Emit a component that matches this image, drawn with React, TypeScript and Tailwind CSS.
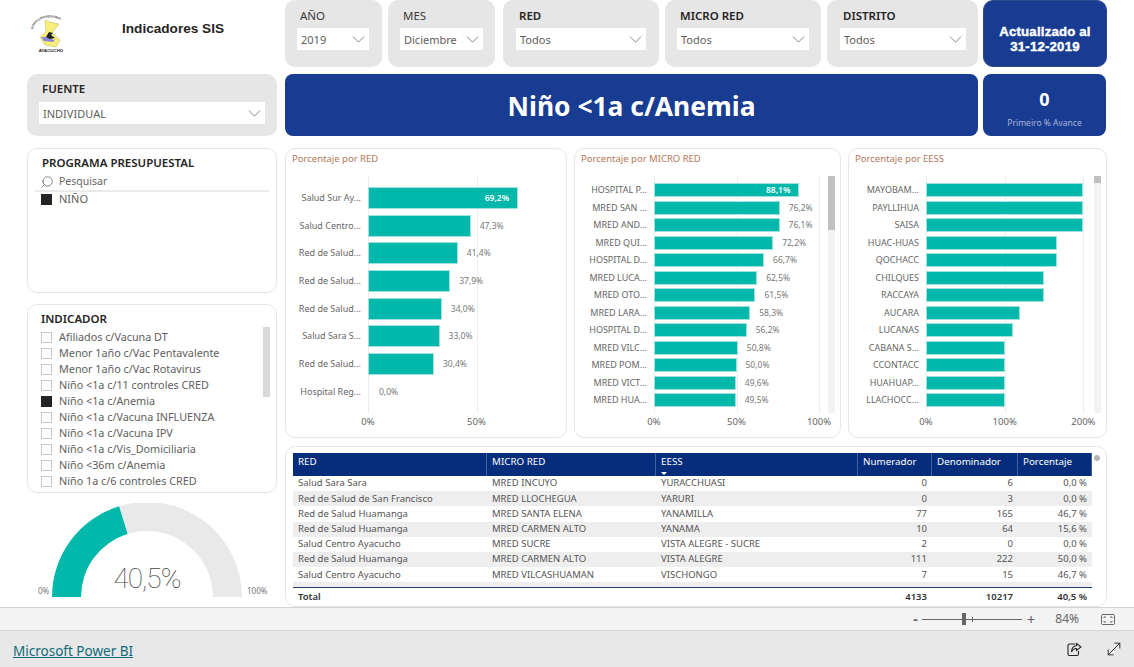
import { ChevronDown, MoveDiagonal, Search } from "lucide-react";

const sans = "font-['Noto_Sans',sans-serif]";

const redRows = [
  { name: "Salud Sur Ay...", value: 69.2 },
  { name: "Salud Centro...", value: 47.3 },
  { name: "Red de Salud...", value: 41.4 },
  { name: "Red de Salud...", value: 37.9 },
  { name: "Red de Salud...", value: 34.0 },
  { name: "Salud Sara S...", value: 33.0 },
  { name: "Red de Salud...", value: 30.4 },
  { name: "Hospital Reg...", value: 0.0 },
];

const microRows = [
  { name: "HOSPITAL P...", value: 88.1 },
  { name: "MRED SAN ...", value: 76.2 },
  { name: "MRED AND...", value: 76.1 },
  { name: "MRED QUI...", value: 72.2 },
  { name: "HOSPITAL D...", value: 66.7 },
  { name: "MRED LUCA...", value: 62.5 },
  { name: "MRED OTO...", value: 61.5 },
  { name: "MRED LARA...", value: 58.3 },
  { name: "HOSPITAL D...", value: 56.2 },
  { name: "MRED VILC...", value: 50.8 },
  { name: "MRED POM...", value: 50.0 },
  { name: "MRED VICT...", value: 49.6 },
  { name: "MRED HUA...", value: 49.5 },
];

const eessRows = [
  { name: "MAYOBAM...", value: 200 },
  { name: "PAYLLIHUA", value: 200 },
  { name: "SAISA", value: 200 },
  { name: "HUAC-HUAS", value: 166.7 },
  { name: "QOCHACC", value: 166.7 },
  { name: "CHILQUES", value: 150 },
  { name: "RACCAYA", value: 150 },
  { name: "AUCARA", value: 120 },
  { name: "LUCANAS", value: 111.1 },
  { name: "CABANA S...", value: 100 },
  { name: "CCONTACC", value: 100 },
  { name: "HUAHUAP...", value: 100 },
  { name: "LLACHOCC...", value: 100 },
];

const indicadores = [
  "Afiliados c/Vacuna DT",
  "Menor 1año c/Vac Pentavalente",
  "Menor 1año c/Vac Rotavirus",
  "Niño <1a c/11 controles CRED",
  "Niño <1a c/Anemia",
  "Niño <1a c/Vacuna INFLUENZA",
  "Niño <1a c/Vacuna IPV",
  "Niño <1a c/Vis_Domiciliaria",
  "Niño <36m c/Anemia",
  "Niño 1a c/6 controles CRED",
];

const tableRows = [
  ["Salud Sara Sara", "MRED INCUYO", "YURACCHUASI", "0", "6", "0,0 %"],
  ["Red de Salud de San Francisco", "MRED LLOCHEGUA", "YARURI", "0", "3", "0,0 %"],
  ["Red de Salud Huamanga", "MRED SANTA ELENA", "YANAMILLA", "77", "165", "46,7 %"],
  ["Red de Salud Huamanga", "MRED CARMEN ALTO", "YANAMA", "10", "64", "15,6 %"],
  ["Salud Centro Ayacucho", "MRED SUCRE", "VISTA ALEGRE - SUCRE", "2", "0", "0,0 %"],
  ["Red de Salud Huamanga", "MRED CARMEN ALTO", "VISTA ALEGRE", "111", "222", "50,0 %"],
  ["Salud Centro Ayacucho", "MRED VILCASHUAMAN", "VISCHONGO", "7", "15", "46,7 %"],
];

const tableCols = "grid grid-cols-[194px_169px_202px_74px_86px_74px]";

function Slicer({
  label,
  value,
  className,
  strong,
  boxClass = "mt-[4px]",
}: {
  label: string;
  value: string;
  className: string;
  strong?: boolean;
  boxClass?: string;
}) {
  return (
    <div className={`bg-[#e6e6e6] rounded-[10px] ${className}`}>
      <div className={`pl-[3px] text-[11.5px] leading-4 ${strong ? "font-semibold text-[#252423]" : "text-[#3b3a39]"}`}>
        {label}
      </div>
      <div className={`h-[22px] bg-white flex items-center justify-between pl-[4px] text-[11px] text-[#605e5c] ${boxClass}`}>
        <span className="pt-[2px]">{value}</span>
        <ChevronDown size={21} strokeWidth={0.8} className="text-[#555]" />
      </div>
    </div>
  );
}

function Check({ on }: { on?: boolean }) {
  return (
    <span
      className={`w-[11px] h-[11px] shrink-0 border ${on ? "bg-[#252423] border-[#252423]" : "bg-white border-[#c8c8c8]"}`}
    />
  );
}

function BarChart({
  title,
  rows,
  ticks,
  scale,
  zero,
  className,
  listClass,
  barClass,
  labelClass,
  showValues,
  thumbClass,
}: {
  title: string;
  rows: { name: string; value: number }[];
  ticks: number[];
  scale: number;
  zero: number;
  className: string;
  listClass: string;
  barClass: string;
  labelClass: string;
  showValues: boolean;
  thumbClass?: string;
}) {
  const max = Math.max(...rows.map((r) => r.value));
  return (
    <div className={`bg-white border border-[#e6e6e6] rounded-[10px] h-[290px] shrink-0 ${className}`}>
      <div className="pl-[6px] pt-[2px] h-[27px] text-[9.5px] leading-4 text-[#b0785a]">{title}</div>
      <div className="relative h-[237px]">
        {ticks.map((t) => (
          <div
            key={t}
            className="absolute top-0 bottom-0 w-px bg-[#eeeeee]"
            style={{ left: zero + t * scale }}
          />
        ))}
        <div className={`relative flex flex-col ${listClass}`}>
          {rows.map((r, i) => (
            <div key={i} className="flex items-center">
              <div className={`text-right text-[9px] leading-3 text-[#666666] shrink-0 whitespace-nowrap ${labelClass}`}>
                {r.name}
              </div>
              <div
                className={`relative shrink-0 bg-[#01b8aa] border border-[#9fe3dd] ${barClass} ${r.value === 0 ? "opacity-0" : ""}`}
                style={{ width: r.value * scale }}
              >
                {showValues && r.value === max && (
                  <span className="absolute right-[8px] top-1/2 -translate-y-1/2 text-[8.5px] leading-3 font-semibold text-white">
                    {r.value.toFixed(1).replace(".", ",")}%
                  </span>
                )}
              </div>
              {showValues && r.value !== max && (
                <span className="ml-[9px] text-[8.5px] leading-3 text-[#777777] whitespace-nowrap">
                  {r.value.toFixed(1).replace(".", ",")}%
                </span>
              )}
            </div>
          ))}
        </div>
        {thumbClass && (
          <div className="absolute top-0 bottom-0 right-[5px] w-[7px] bg-[#f3f3f3]">
            <div className={`bg-[#c0c0c0] ${thumbClass}`} />
          </div>
        )}
      </div>
      <div className="relative h-[18px]">
        {ticks.map((t) => (
          <span
            key={t}
            className="absolute top-[2px] -translate-x-1/2 text-[9.5px] text-[#666666]"
            style={{ left: zero + t * scale }}
          >
            {t}%
          </span>
        ))}
      </div>
    </div>
  );
}

function Logo() {
  return (
    <svg width="40" height="46" viewBox="0 0 40 46" className="ml-[5px] mt-[2px] shrink-0">
      <path id="logo-arc" d="M2 22 C5 7 32 6 37 22" fill="none" />
      <text fontSize="3" fontWeight="700" fill="#333" fontFamily="Liberation Sans, sans-serif">
        <textPath href="#logo-arc">DIRECCION REGIONAL</textPath>
      </text>
      <path
        d="M14 13 L19 15 L28 17 L21 26 L29 33 L25 40 L14 38 L9 30 L15 25 Z"
        fill="#f7ef7a"
        stroke="#b9b25a"
        strokeWidth="0.5"
      />
      <path d="M10 30 L16 30 L23 33 L25 31 L22 35 L13 34 Z" fill="#8b86d8" />
      <path d="M15 30 L18 25 L22 26 L20 28 L24 31 L19 32 Z" fill="#222" />
      <text
        x="20"
        y="45"
        textAnchor="middle"
        fontSize="4.4"
        fontWeight="700"
        fill="#222"
        fontFamily="Liberation Sans, sans-serif"
      >
        AYACUCHO
      </text>
    </svg>
  );
}

function Gauge() {
  return (
    <div className="relative mt-[10px] flex items-end h-[94px]">
      <span className="w-[25px] pl-[11px] text-[8px] leading-3 text-[#777777]">0%</span>
      <svg width="190" height="94" viewBox="0 0 190 94" className="shrink-0">
        <path d="M67.1 3.2 A95 95 0 0 1 190 94 H161 A66 66 0 0 0 75.6 30.9 Z" fill="#e9e9e9" />
        <path d="M0 94 A95 95 0 0 1 67.1 3.2 L75.6 30.9 A66 66 0 0 0 29 94 Z" fill="#01b8aa" />
      </svg>
      <span className="ml-[5px] text-[8px] leading-3 text-[#777777]">100%</span>
      <div className="absolute left-[25px] w-[190px] bottom-[2px] text-center font-['Roboto',sans-serif] font-thin text-[28px] tracking-[-1px] leading-8 text-[#444444]">
        40,5%
      </div>
    </div>
  );
}

function ZoomBar() {
  return (
    <div className="h-[24px] bg-[#f3f3f3] border-t border-b border-[#d4d4d4] flex items-center justify-end pr-[19px] text-[#666666]">
      <span className="text-[14px] font-bold leading-none">-</span>
      <div className="relative w-[100px] h-px bg-[#666666] ml-[4px]">
        <div className="absolute left-[40px] -top-[6px] w-[4px] h-[12px] bg-[#666666]" />
        <div className="absolute left-[50px] -top-[2px] w-px h-[5px] bg-[#666666]" />
      </div>
      <span className="ml-[5px] text-[15px] leading-none">+</span>
      <span className="ml-[20px] text-[12px]">84%</span>
      <svg width="14" height="11" viewBox="0 0 14 11" className="ml-[22px]" fill="none" stroke="#666" strokeWidth="1">
        <rect x="0.5" y="0.5" width="13" height="10" rx="1" />
        <path d="M3 4V3H5M9 3H11V4M11 7V8H9M5 8H3V7" />
      </svg>
    </div>
  );
}

function ShareIcon() {
  return (
    <svg width="15" height="15" viewBox="0 0 15 15" fill="none" stroke="#252423" strokeWidth="1.1">
      <path d="M8 2H2.5A1.5 1.5 0 0 0 1 3.5V12A1.5 1.5 0 0 0 2.5 13.5H10A1.5 1.5 0 0 0 11.5 12V9" />
      <path d="M9.5 1.5L14 5L9.5 8.5V6.5C7 6.5 5.5 7.5 4.5 10C4.5 6.5 6.5 4 9.5 3.5Z" />
    </svg>
  );
}

export default function App() {
  return (
    <div className={`w-[1134px] h-[667px] overflow-hidden bg-white flex flex-col ${sans}`}>
      <main className="h-[607px] flex pl-[27px] gap-[8px]">
        {/* left column */}
        <div className="w-[250px] shrink-0 flex flex-col">
          <div className="h-[67px] -ml-[1px] flex items-center pb-[9px]">
            <Logo />
            <div className="ml-[51px] font-['Liberation_Sans',sans-serif] font-bold text-[13.6px] text-[#252423]">
              Indicadores SIS
            </div>
          </div>
          <Slicer
            label="FUENTE"
            value="INDIVIDUAL"
            className="mt-[7px] h-[62px] pt-[7px] pl-[12px] pr-[12px]"
            boxClass="mt-[5px]"
            strong
          />

          <div className="mt-[12px] h-[145px] border border-[#e6e6e6] rounded-[10px] px-[7px] pt-[6px]">
            <div className="pl-[7px] text-[11.5px] leading-4 font-semibold text-[#252423]">PROGRAMA PRESUPUESTAL</div>
            <div className="h-[21px] pt-[3px] flex items-center pl-[5px] text-[10.5px] text-[#666666] border-b-2 border-[#eaeaea]">
              <Search size={14} strokeWidth={1} className="-scale-x-100 text-[#333]" />
              <span className="ml-[5px]">Pesquisar</span>
            </div>
            <div className="h-[14px] flex items-center gap-[7px] pl-[6px] text-[11px] text-[#605e5c]">
              <Check on />
              NIÑO
            </div>
          </div>

          <div className="relative mt-[11px] h-[189px] border border-[#e6e6e6] rounded-[10px] px-[13px] pt-[6px]">
            <div className="text-[11.5px] leading-4 font-semibold text-[#252423]">INDICADOR</div>
            <div className="mt-[2px] flex flex-col">
              {indicadores.map((item) => (
                <div key={item} className="h-[16px] flex items-center gap-[7px] text-[10.8px] text-[#605e5c] whitespace-nowrap">
                  <Check on={item === "Niño <1a c/Anemia"} />
                  {item}
                </div>
              ))}
            </div>
            <div className="absolute right-[6px] top-[22px] w-[7px] h-[70px] bg-[#d9d9d9]" />
          </div>

          <Gauge />
        </div>

        {/* right column */}
        <div className="w-[822px] shrink-0 flex flex-col">
          <div className="h-[67px] flex">
            <Slicer label="AÑO" value="2019" className="w-[97px] pt-[8px] pl-[12px] pr-[13px]" />
            <Slicer label="MES" value="Diciembre" className="w-[107px] ml-[6px] pt-[8px] pl-[12px] pr-[12px]" />
            <Slicer label="RED" value="Todos" className="w-[156px] ml-[8px] pt-[8px] pl-[13px] pr-[13px]" strong />
            <Slicer label="MICRO RED" value="Todos" className="w-[156px] ml-[6px] pt-[8px] pl-[12px] pr-[12px]" strong />
            <Slicer label="DISTRITO" value="Todos" className="w-[151px] ml-[6px] pt-[8px] pl-[13px] pr-[12px]" strong />
            <div className="w-[124px] ml-[5px] pt-[11px] bg-[#193c93] border border-[#2d4a8f] rounded-[10px] flex items-center justify-center text-center font-['Liberation_Sans',sans-serif] font-bold text-[13.2px] leading-[15px] tracking-[0.2px] text-white [-webkit-text-stroke:0.4px_white]">
              Actualizado al
              <br />
              31-12-2019
            </div>
          </div>

          <div className="mt-[7px] h-[62px] flex">
            <div className="w-[693px] pt-[3px] bg-[#193c93] rounded-[8px] flex items-center justify-center font-bold text-[26.4px] text-white">
              Niño &lt;1a c/Anemia
            </div>
            <div className="w-[123px] ml-[5px] bg-[#193c93] rounded-[8px] flex flex-col items-center pt-[13px]">
              <div className="text-[18px] leading-6 font-bold text-white">0</div>
              <div className="mt-[6px] text-[8.5px] leading-3 text-[#a9b6d6]">Primeiro % Avance</div>
            </div>
          </div>

          <div className="mt-[12px] flex gap-[7px]">
            <BarChart
              title="Porcentaje por RED"
              rows={redRows}
              ticks={[0, 50]}
              scale={2.17}
              zero={82}
              className="w-[282px]"
              listClass="pt-[11px] gap-[5.7px]"
              barClass="h-[22px]"
              labelClass="w-[82px] pr-[7px]"
              showValues
            />
            <BarChart
              title="Porcentaje por MICRO RED"
              rows={microRows}
              ticks={[0, 50, 100]}
              scale={1.65}
              zero={79}
              className="w-[267px]"
              listClass="pt-[7px] gap-[3.5px]"
              barClass="h-[14px]"
              labelClass="w-[79px] pr-[7px]"
              showValues
              thumbClass="h-[54px]"
            />
            <BarChart
              title="Porcentaje por EESS"
              rows={eessRows}
              ticks={[0, 100, 200]}
              scale={0.787}
              zero={77}
              className="w-[259px]"
              listClass="pt-[7px] gap-[3.5px]"
              barClass="h-[14px]"
              labelClass="w-[77px] pr-[7px]"
              showValues={false}
              thumbClass="h-[7px]"
            />
          </div>

          <div className="relative mt-[8px] h-[161px] border border-[#e6e6e6] rounded-[10px] pl-[7px] pt-[6px] text-[9.5px] text-[#555555]">
            <div className={`${tableCols} w-[799px] h-[23px] bg-[#052d7c] text-white text-[9.8px] leading-4`}>
              {["RED", "MICRO RED", "EESS", "Numerador", "Denominador", "Porcentaje"].map((h) => (
                <div key={h} className="relative pl-[5px] pt-[1px] border-r border-[#3f5f9f]">
                  {h}
                  {h === "EESS" && (
                    <span className="absolute left-[5px] bottom-[1px] w-0 h-0 border-x-[3px] border-x-transparent border-t-[3px] border-t-white" />
                  )}
                </div>
              ))}
            </div>
            {tableRows.map((row, i) => (
              <div
                key={i}
                className={`${tableCols} w-[799px] h-[15.2px] items-center ${i % 2 === 1 ? "bg-[#eeeeee]" : "bg-white"}`}
              >
                {row.map((cell, j) => (
                  <div key={j} className={j > 2 ? "text-right pr-[5px]" : "pl-[5px] whitespace-nowrap"}>
                    {cell}
                  </div>
                ))}
              </div>
            ))}
            <div className="w-[799px] h-[5px] bg-[#eeeeee]" />
            <div className={`${tableCols} w-[799px] h-[18px] items-center border-t border-[#1f3a73] font-semibold text-[#333333]`}>
              <div className="pl-[5px]">Total</div>
              <div />
              <div />
              <div className="text-right pr-[5px]">4133</div>
              <div className="text-right pr-[5px]">10217</div>
              <div className="text-right pr-[5px]">40,5 %</div>
            </div>
            <div className="absolute right-[6px] top-[8px] w-[6px] h-[6px] rounded-sm bg-[#b5b5b5]" />
          </div>
        </div>
      </main>

      <ZoomBar />

      <footer className="h-[36px] bg-[#e8e8e8] flex items-center pl-[13px] pr-[10px]">
        <a href="#" className="pt-[4px] text-[13.5px] text-[#106a76] underline">
          Microsoft Power BI
        </a>
        <div className="ml-auto flex items-center gap-[22px]">
          <ShareIcon />
          <MoveDiagonal size={20} strokeWidth={1.1} className="text-[#252423]" />
        </div>
      </footer>
    </div>
  );
}
